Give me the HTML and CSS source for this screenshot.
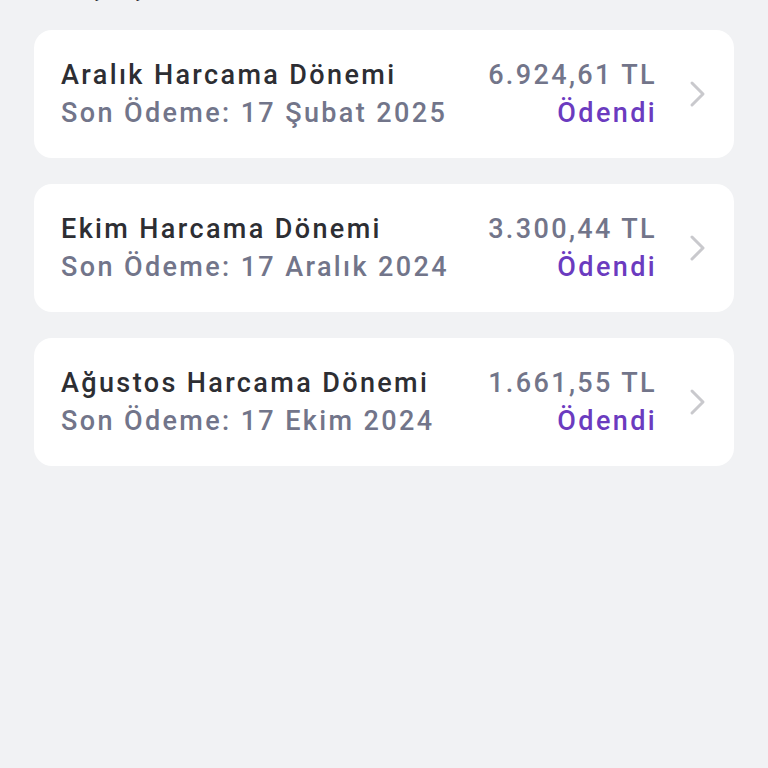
FILE: index.html
```html
<!DOCTYPE html>
<html lang="tr">
<head>
    <meta charset="UTF-8">
    <meta name="viewport" content="width=device-width, initial-scale=1.0">
    <title>Geçmiş Ekstreler</title>
    <link rel="stylesheet" href="styles.css">
</head>
<body>
    <div class="container">
        <h2 class="section-title">Geçmiş Ekstreler</h2>

        <div class="statement">
            <div class="info">
                <div class="period">Aralık Harcama Dönemi</div>
                <div class="due">Son Ödeme: 17 Şubat 2025</div>
            </div>
            <div class="amount-box">
                <div class="amount">6.924,61 TL</div>
                <div class="status">Ödendi</div>
            </div>
            <svg class="chevron" viewBox="0 0 20 28"><path d="M4 3l11 11-11 11"/></svg>
        </div>

        <div class="statement">
            <div class="info">
                <div class="period">Ekim Harcama Dönemi</div>
                <div class="due">Son Ödeme: 17 Aralık 2024</div>
            </div>
            <div class="amount-box">
                <div class="amount">3.300,44 TL</div>
                <div class="status">Ödendi</div>
            </div>
            <svg class="chevron" viewBox="0 0 20 28"><path d="M4 3l11 11-11 11"/></svg>
        </div>

        <div class="statement">
            <div class="info">
                <div class="period">Ağustos Harcama Dönemi</div>
                <div class="due">Son Ödeme: 17 Ekim 2024</div>
            </div>
            <div class="amount-box">
                <div class="amount">1.661,55 TL</div>
                <div class="status">Ödendi</div>
            </div>
            <svg class="chevron" viewBox="0 0 20 28"><path d="M4 3l11 11-11 11"/></svg>
        </div>
    </div>
</body>
</html>
```

FILE: styles.css
```css
html, body {
    height: 100%;
}
body {
    margin: 0;
    background-color: #f1f2f4;
    font-family: Roboto, "Noto Sans", Arial, sans-serif;
    overflow: hidden;
}
.container {
    padding: 0 34px;
    display: flex;
    flex-direction: column;
    gap: 26px;
}
.section-title {
    font-size: 22px;
    font-weight: 500;
    letter-spacing: 0.07em;
    color: #2b2c31;
    margin: -26px 0 0 27px;
    line-height: 30px;
}
.statement {
    background-color: #ffffff;
    border-radius: 18px;
    height: 128px;
    box-sizing: border-box;
    padding: 0 26px 0 27px;
    display: flex;
    align-items: center;
}
.info {
    flex: 1;
    font-size: 27px;
    font-weight: 500;
    line-height: 38px;
    letter-spacing: 0.088em;
}
.period {
    color: #2d2e33;
}
.due {
    color: #72758a;
}
.amount-box {
    text-align: right;
    font-size: 27px;
    font-weight: 500;
    line-height: 38px;
    letter-spacing: 0.088em;
}
.amount {
    color: #72758a;
}
.status {
    color: #6b3bbf;
}
.chevron {
    width: 20px;
    height: 28px;
    margin-left: 31px;
    fill: none;
    stroke: #c9c9cd;
    stroke-width: 3;
    stroke-linecap: round;
    stroke-linejoin: round;
}
```
